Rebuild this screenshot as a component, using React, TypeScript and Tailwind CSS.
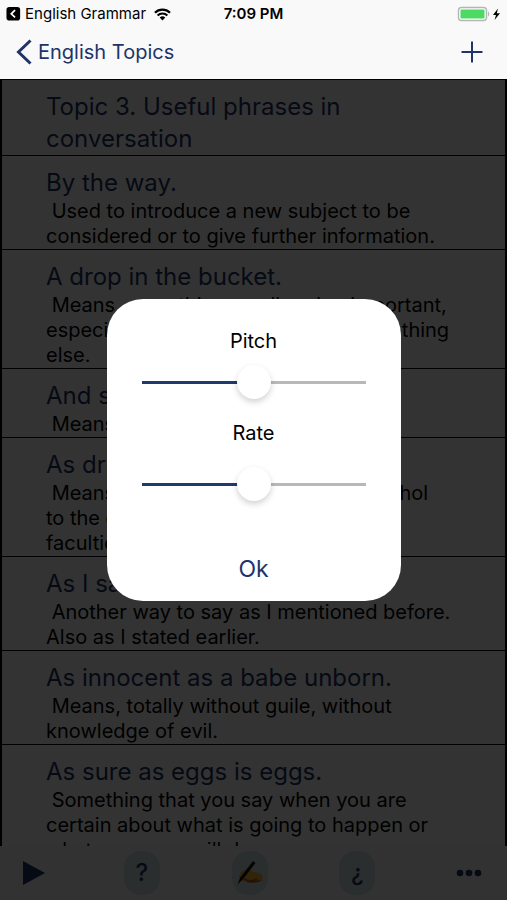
import React, { useState } from 'react';

const PHRASES = [
  { title: 'Topic 3. Useful phrases in conversation', text: '' },
  { title: 'By the way.', text: ' Used to introduce a new subject to be considered or to give further information.' },
  { title: 'A drop in the bucket.', text: ' Means, something small and unimportant, especially when compared with something else.' },
  { title: 'And so on.', text: ' Means, etcetera.' },
  { title: 'As drunk as a lord.', text: ' Means, having gulped too much alcohol\nto the extent of losing control of your faculties.' },
  { title: 'As I said before.', text: ' Another way to say as I mentioned before. Also as I stated earlier.' },
  { title: 'As innocent as a babe unborn.', text: ' Means, totally without guile, without knowledge of evil.' },
  { title: 'As sure as eggs is eggs.', text: ' Something that you say when you are certain about what is going to happen or what someone will do.' },
];

const StatusBar: React.FC = () => (
  <div className="grid grid-cols-3 items-center h-7 px-1.5 text-black">
    <a href="#back-to-app" className="flex items-center gap-1 text-[15px] whitespace-nowrap">
      <svg width="16" height="16" viewBox="0 0 16 16">
        <rect x="0.5" y="0.5" width="14.5" height="14.5" rx="3" fill="#000" />
        <path d="M9.6 4 5.6 7.8l4 3.8" fill="none" stroke="#fff" strokeWidth="1.8" />
      </svg>
      <span>English Grammar</span>
      <svg className="ml-1" width="18" height="13" viewBox="0 0 18 13">
        <path d="M1 4.6a11.4 11.4 0 0 1 16 0" fill="none" stroke="#000" strokeWidth="2.4" />
        <path d="M3.8 7.5a7.4 7.4 0 0 1 10.4 0" fill="none" stroke="#000" strokeWidth="2.2" />
        <path d="M6 9.8a4.3 4.3 0 0 1 6 0L9 12.8z" fill="#000" />
      </svg>
    </a>
    <span className="text-center text-[15px] font-semibold">7:09 PM</span>
    <svg className="justify-self-end" width="44" height="16" viewBox="0 0 44 16">
      <rect x="1.5" y="1.5" width="28" height="13" rx="3" fill="#fff" stroke="#b5b5b5" strokeWidth="1.4" />
      <rect x="3.5" y="3.5" width="24" height="9" rx="1" fill="#4cd964" />
      <path d="M31 5.5c1.6.6 1.6 4.4 0 5z" fill="#b5b5b5" />
      <path d="M41 2.5 36 9h3l-1.4 5L43 7.3h-3.2z" fill="#000" />
    </svg>
  </div>
);

const WritingHand: React.FC = () => (
  <svg width="28" height="28" viewBox="0 0 28 28">
    <path d="M3 17c1-3 3-5 6-6l5-1 3 3 7 1c2 1 2.500 3 2.500 5v3c-5 1-11 1-16 1-3 0-6-2-7.500-5z" fill="#f5b32b" />
    <path d="M8 20c4 2.500 9 2 13 0M11 22.500c4 .8 9 .5 13-1" fill="none" stroke="#a8660c" strokeWidth="1.500" />
    <path d="M1.500 25.500 4 19 17 2l2.500 2L7 20z" fill="#111" />
  </svg>
);

interface SpeechSliderProps {
  id: string;
  label: string;
  value: number;
  gap: string;
  onChange: (value: number) => void;
}

const SpeechSlider: React.FC<SpeechSliderProps> = ({ id, label, value, gap, onChange }) => (
  <div className={`flex flex-col items-center w-full ${gap}`}>
    <label htmlFor={id} className="text-xl leading-7">{label}</label>
    <input
      id={id}
      type="range"
      min={0}
      max={100}
      value={value}
      onChange={(e) => onChange(Number(e.target.value))}
      style={{ backgroundImage: `linear-gradient(to right, #1f3a70 ${value}%, #b8b8b8 ${value}%)` }}
      className="w-full h-[34px] appearance-none bg-transparent bg-[length:100%_3px] bg-center bg-no-repeat outline-none cursor-pointer [&::-webkit-slider-thumb]:appearance-none [&::-webkit-slider-thumb]:w-[34px] [&::-webkit-slider-thumb]:h-[34px] [&::-webkit-slider-thumb]:rounded-full [&::-webkit-slider-thumb]:bg-white [&::-webkit-slider-thumb]:shadow-[0_3px_6px_rgba(0,0,0,0.18)]"
    />
  </div>
);

export default function App() {
  const [pitch, setPitch] = useState(50);
  const [rate, setRate] = useState(50);
  const [open, setOpen] = useState(true);

  return (
    <div className="h-screen flex flex-col bg-white font-['Inter',sans-serif]">
      <header className="relative z-20 shrink-0 bg-[#f9f9f9] pb-2">
        <StatusBar />
        <nav className="flex items-center justify-between h-[43px] pt-1 pl-4 pr-6 text-[#213468]">
          <a href="#topics" className="flex items-center gap-1.5 text-xl">
            <svg width="16" height="26" viewBox="0 0 16 26">
              <path d="M14.500 1.500 2.500 13l12 11.500" fill="none" stroke="currentColor" strokeWidth="3" />
            </svg>
            English Topics
          </a>
          <button type="button" aria-label="Add">
            <svg width="22" height="22" viewBox="0 0 22 22">
              <path d="M11 0.500v21M0.500 11h21" stroke="currentColor" strokeWidth="2" />
            </svg>
          </button>
        </nav>
      </header>

      <main className="flex-1 min-h-0 overflow-hidden border-x-2 border-t border-black">
        {PHRASES.map((phrase) => (
          <article key={phrase.title} className="pt-[11px] pl-11 pr-12 border-b border-black">
            <h2 className="text-2xl leading-8 text-[#213468]">{phrase.title}</h2>
            {phrase.text && <p className="text-xl leading-[25px] text-black whitespace-pre-wrap">{phrase.text}</p>}
          </article>
        ))}
      </main>

      <footer className="shrink-0 flex items-center justify-between h-[54px] px-4 bg-[#f9f9f9] text-[#213468]">
        <button type="button" aria-label="Play" className="w-9 flex justify-center">
          <svg width="22" height="24" viewBox="0 0 22 24"><path d="M0 0v24l22-12z" fill="currentColor" /></svg>
        </button>
        <button type="button" className="w-9 h-11 rounded-2xl bg-[#d5e4ea] text-2xl font-medium">?</button>
        <button type="button" aria-label="Write" className="w-9 h-11 rounded-2xl bg-[#d5e4ea] flex items-center justify-center">
          <WritingHand />
        </button>
        <button type="button" className="w-9 h-11 rounded-2xl bg-[#d5e4ea] text-2xl font-medium">¿</button>
        <button type="button" aria-label="More" className="w-11 flex justify-center">
          <svg width="26" height="8" viewBox="0 0 26 8" fill="currentColor">
            <circle cx="4" cy="4" r="3.300" />
            <circle cx="13" cy="4" r="3.300" />
            <circle cx="22" cy="4" r="3.300" />
          </svg>
        </button>
      </footer>

      {open && (
        <div className="fixed inset-0 z-10 flex items-center justify-center bg-black/80">
          <div role="dialog" className="flex flex-col items-center gap-5 w-[294px] px-[35px] pt-7 pb-4 rounded-[36px] bg-white text-black">
            <SpeechSlider id="pitch" label="Pitch" value={pitch} gap="gap-2.5" onChange={setPitch} />
            <SpeechSlider id="rate" label="Rate" value={rate} gap="gap-5" onChange={setRate} />
            <button type="button" onClick={() => setOpen(false)} className="mt-8 px-4 text-[23px] leading-8 text-[#213468]">Ok</button>
          </div>
        </div>
      )}
    </div>
  );
}
